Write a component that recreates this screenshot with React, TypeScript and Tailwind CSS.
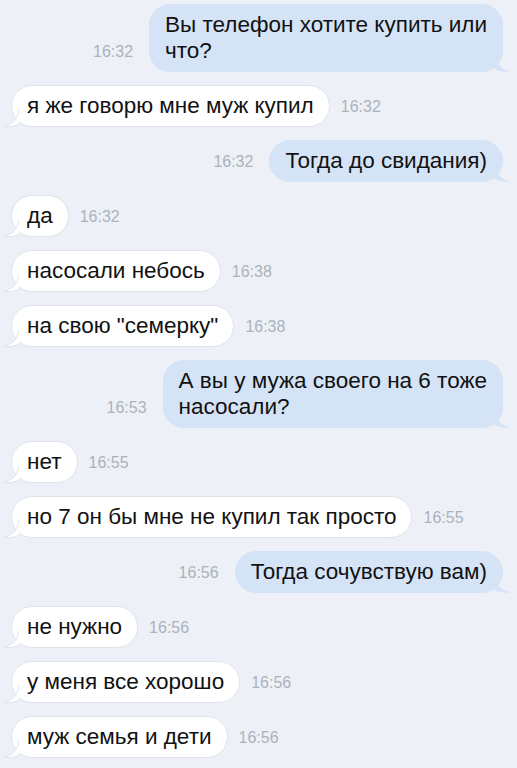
type Msg = { out: boolean; text: string; time: string };

const messages: Msg[] = [
  { out: true, text: "Вы телефон хотите купить или\nчто?", time: "16:32" },
  { out: false, text: "я же говорю мне муж купил", time: "16:32" },
  { out: true, text: "Тогда до свидания)", time: "16:32" },
  { out: false, text: "да", time: "16:32" },
  { out: false, text: "насосали небось", time: "16:38" },
  { out: false, text: 'на свою "семерку"', time: "16:38" },
  { out: true, text: "А вы у мужа своего на 6 тоже\nнасосали?", time: "16:53" },
  { out: false, text: "нет", time: "16:55" },
  { out: false, text: "но 7 он бы мне не купил так просто", time: "16:55" },
  { out: true, text: "Тогда сочувствую вам)", time: "16:56" },
  { out: false, text: "не нужно", time: "16:56" },
  { out: false, text: "у меня все хорошо", time: "16:56" },
  { out: false, text: "муж семья и дети", time: "16:56" },
];

const Tail = ({ out }: { out: boolean }) =>
  out ? (
    <svg className="absolute -right-[9px] -bottom-px" width="16" height="18" viewBox="0 0 16 18">
      <path d="M0 0 C1 8 4 14 15 17.5 C9 18 4 17.5 0 15 Z" fill="#d5e3f6" />
    </svg>
  ) : (
    <svg className="absolute -left-[9px] -bottom-px" width="16" height="18" viewBox="0 0 16 18">
      <path
        d="M16 0 C15 8 12 14 1 17.5 C7 18 12 17.5 16 15"
        fill="#ffffff"
        stroke="#dfe4eb"
        strokeWidth="1"
      />
    </svg>
  );

const Bubble = ({ m }: { m: Msg }) => (
  <div className={`flex items-end ${m.out ? "flex-row-reverse gap-[16px]" : "gap-[11px]"}`}>
    <div
      className={`relative rounded-[21px] border px-[15px] py-[7px] text-[22.5px] leading-[26px] text-[#111] whitespace-pre-line ${
        m.out ? "bg-[#d5e3f6] border-[#d5e3f6]" : "bg-white border-[#dfe4eb]"
      }`}
    >
      <Tail out={m.out} />
      <span className="relative">{m.text}</span>
    </div>
    <div className="mb-[10px] text-[16px] leading-[20px] text-[#abb2bc]">{m.time}</div>
  </div>
);

export default function App() {
  return (
    <div
      className="w-[517px] h-[768px] overflow-hidden bg-[#edf1f7] flex flex-col gap-[13px] pt-[4px] pl-[11px] pr-[14px]"
      style={{ fontFamily: '"Liberation Sans", Arial, sans-serif' }}
    >
      {messages.map((m, i) => (
        <Bubble key={i} m={m} />
      ))}
    </div>
  );
}
